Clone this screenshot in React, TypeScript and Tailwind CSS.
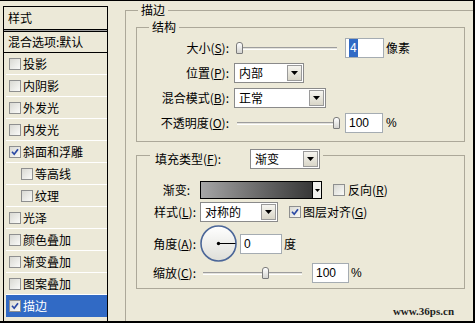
import React from 'react';

const styleItems = [
  { name: '投影' },
  { name: '内阴影' },
  { name: '外发光' },
  { name: '内发光' },
  { name: '斜面和浮雕', checked: true },
  { name: '等高线', sub: true },
  { name: '纹理', sub: true },
  { name: '光泽' },
  { name: '颜色叠加' },
  { name: '渐变叠加' },
  { name: '图案叠加' },
  { name: '描边', checked: true, active: true },
];

const Check = ({ checked }: { checked?: boolean }) => (
  <span className="flex h-[12px] w-[12px] shrink-0 items-center justify-center border border-[#8e8f8f] bg-gradient-to-br from-[#d9d9d3] to-[#fafaf8]">
    {checked && (
      <svg width="8" height="8" viewBox="0 0 8 8">
        <path d="M1 3.8 L3.2 6.2 L7 1.2" stroke="#2a48a4" strokeWidth="1.7" fill="none" />
      </svg>
    )}
  </span>
);

const Arrow = () => (
  <svg width="7" height="4" viewBox="0 0 7 4">
    <path d="M0 0 H7 L3.5 4 Z" fill="#000" />
  </svg>
);

const Select = ({ value, className }: { value: string; className: string }) => (
  <div className={`flex h-[20px] shrink-0 border border-[#8a8a8a] bg-white ${className}`}>
    <span className="flex-1 pl-[4px] leading-[18px]">{value}</span>
    <span className="m-[1px] flex w-[15px] items-center justify-center border border-[#9a9a9a] bg-gradient-to-b from-[#f6f5f0] to-[#d9d6c8]">
      <Arrow />
    </span>
  </div>
);

const Input = ({ children, className }: { children: React.ReactNode; className: string }) => (
  <div className={`flex h-[20px] shrink-0 items-center border border-[#a5acb2] bg-white pl-[3px] font-['Liberation_Sans',sans-serif] text-[12px] ${className}`}>
    {children}
  </div>
);

const Slider = ({ className, pos }: { className: string; pos: number }) => (
  <div className={`relative h-[20px] shrink-0 ${className}`}>
    <div className="absolute left-[3px] right-[4px] top-[9px] h-[3px] border-t border-b border-t-[#9d9d9d] border-b-[#ffffff] bg-[#e4e3dc]" />
    <div
      className="absolute top-[4px] h-[12px] w-[7px] rounded-t-[3px] rounded-b-[1px] border border-[#7b7b7b] bg-gradient-to-b from-white to-[#d4d4d0]"
      style={{ left: pos }}
    />
  </div>
);

const Dial = () => (
  <svg width="37" height="37" viewBox="0 0 37 37" className="shrink-0">
    <defs>
      <linearGradient id="dialFill" x1="0" y1="0" x2="0" y2="1">
        <stop offset="0" stopColor="#ffffff" />
        <stop offset="1" stopColor="#deded8" />
      </linearGradient>
    </defs>
    <circle cx="18.5" cy="18.5" r="17.5" fill="url(#dialFill)" stroke="#4b6698" strokeWidth="1.6" />
    <line x1="18.5" y1="18.5" x2="35.5" y2="18.5" stroke="#000" strokeWidth="1" />
    <circle cx="18.5" cy="18.5" r="1.7" fill="#000" />
  </svg>
);

export default function App() {
  return (
    <div className="flex h-[323px] w-[475px] overflow-hidden border-t border-r-2 border-b-2 border-black bg-[#ece9d8] font-['Noto_Sans_CJK_SC',sans-serif] text-[12px] text-black">
      {/* styles list */}
      <div className="ml-[3px] mt-[5px] h-[330px] w-[105px] shrink-0 border border-black">
        <div className="flex h-[23px] items-center border-b border-black pl-[4px]">样式</div>
        <div className="h-[1px] bg-[#9d9d9d]" />
        <div className="flex h-[22px] items-center border-y border-black pl-[4px]">混合选项:默认</div>
        <div className="pl-[2px]">
          {styleItems.map((s) => (
            <div
              key={s.name}
              className={`flex h-[22px] items-center gap-[2px] border-b ${
                s.active ? 'border-[#316ac5] bg-[#316ac5] text-white' : 'border-white'
              } ${s.sub ? 'pl-[15px]' : 'pl-[3px]'}`}
            >
              <Check checked={s.checked} />
              <span>{s.name}</span>
            </div>
          ))}
        </div>
      </div>

      {/* stroke group */}
      <div className="ml-[17px] mt-[9px] h-[330px] w-[360px] shrink-0 border border-[#aca899] pl-[10px]">
        <div className="-mt-[8px] ml-[2px] h-[14px] w-fit bg-[#ece9d8] px-[3px] leading-[14px]">描边</div>

        {/* structure */}
        <div className="mt-[10px] h-[115px] w-[329px] border border-[#aca899]">
          <div className="-mt-[8px] ml-[12px] h-[14px] w-fit bg-[#ece9d8] px-[3px] leading-[14px]">结构</div>
          <div className="mt-[4px] flex flex-col gap-[5px]">
            <div className="flex h-[20px] items-center">
              <span className="w-[92px] text-right">大小(<u>S</u>):</span>
              <Slider className="ml-[5px] w-[107px]" pos={2} />
              <Input className="ml-[4px] w-[39px]">
                <span className="bg-[#316ac5] px-[1px] text-white">4</span>
              </Input>
              <span className="ml-[2px]">像素</span>
            </div>
            <div className="flex h-[20px] items-center">
              <span className="w-[92px] text-right">位置(<u>P</u>):</span>
              <Select value="内部" className="ml-[5px] w-[70px]" />
            </div>
            <div className="flex h-[20px] items-center">
              <span className="w-[92px] text-right">混合模式(<u>B</u>):</span>
              <Select value="正常" className="ml-[5px] w-[92px]" />
            </div>
            <div className="flex h-[20px] items-center">
              <span className="w-[92px] text-right">不透明度(<u>O</u>):</span>
              <Slider className="ml-[5px] w-[107px]" pos={99} />
              <Input className="ml-[4px] w-[38px]">100</Input>
              <span className="ml-[3px] font-['Liberation_Sans',sans-serif]">%</span>
            </div>
          </div>
        </div>

        {/* fill */}
        <div className="mt-[13px] h-[134px] w-[329px] border border-[#aca899]">
          <div className="-mt-[7px] ml-[13px] flex h-[20px] w-fit items-center bg-[#ece9d8] pl-[5px] pr-[3px]">
            <span className="w-[95px]">填充类型(<u>F</u>):</span>
            <Select value="渐变" className="w-[70px]" />
          </div>

          <div className="mt-[12px] flex h-[18px] items-center">
            <span className="w-[59px] pr-[6px] text-right">渐变:</span>
            <div className="ml-[4px] flex h-[18px] w-[122px] border border-black">
              <div className="flex-1 bg-gradient-to-r from-[#a6a6a6] to-[#383838]" />
              <div className="flex w-[9px] items-center justify-center border-l border-black bg-[#f2f2ee]">
                <svg width="5" height="3" viewBox="0 0 5 3">
                  <path d="M0 0 H5 L2.5 3 Z" fill="#000" />
                </svg>
              </div>
            </div>
            <span className="ml-[11px]">
              <Check />
            </span>
            <span className="ml-[3px]">反向(<u>R</u>)</span>
          </div>

          <div className="mt-[3px] flex h-[20px] items-center">
            <span className="w-[59px] text-right">样式(<u>L</u>):</span>
            <Select value="对称的" className="ml-[4px] w-[78px]" />
            <span className="ml-[11px]">
              <Check checked />
            </span>
            <span className="ml-[2px]">图层对齐(<u>G</u>)</span>
          </div>

          <div className="mt-[3px] flex h-[37px] items-center">
            <span className="w-[59px] text-right">角度(<u>A</u>):</span>
            <span className="ml-[4px]">
              <Dial />
            </span>
            <Input className="ml-[3px] w-[42px]">0</Input>
            <span className="ml-[2px]">度</span>
          </div>

          <div className="mt-[1px] flex h-[20px] items-center">
            <span className="w-[59px] text-right">缩放(<u>C</u>):</span>
            <Slider className="ml-[4px] w-[106px]" pos={62} />
            <Input className="ml-[6px] w-[37px]">100</Input>
            <span className="ml-[2px] font-['Liberation_Sans',sans-serif]">%</span>
          </div>
        </div>

        <div className="mt-[15px] flex w-[329px] justify-end pr-[11px] font-['Liberation_Serif',serif] text-[11px] font-bold leading-[14px] text-[#222]">
          www.36ps.cn
        </div>
      </div>
    </div>
  );
}
